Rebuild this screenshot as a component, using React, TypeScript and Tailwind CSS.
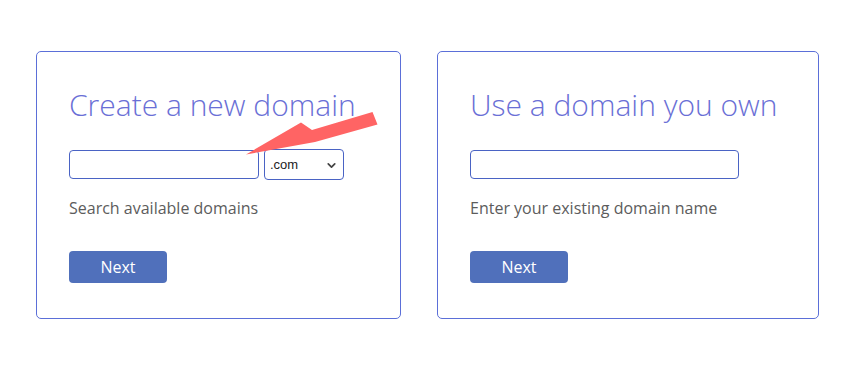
import { ChevronDown } from 'lucide-react';

function Card({
    title,
    hint,
    withTld,
    inputWidth,
    width,
}: {
    title: string;
    hint: string;
    withTld?: boolean;
    inputWidth: string;
    width: string;
}) {
    return (
        <div className={`${width} h-[268px] shrink-0 rounded-[5px] border border-[#5b6fd8] bg-white pl-[32px] pt-[35px]`}>
            <h2 className="text-[30px] leading-[36px] font-light text-[#6a6fd6]">{title}</h2>

            <div className="mt-[26px] flex items-start gap-[5px]">
                <input
                    type="text"
                    className={`${inputWidth} mt-px h-[29px] rounded-[4px] border border-[#4a63c4] bg-white outline-none`}
                />
                {withTld && (
                    <div className="relative flex h-[31px] w-[80px] items-center rounded-[4px] border border-[#4a63c4] bg-white pl-[5px]">
                        <span className="font-['Liberation_Sans',sans-serif] text-[13px] text-[#222]">.com</span>
                        <ChevronDown size={13} strokeWidth={3.2} className="absolute right-[5px] top-[9px] text-[#444]" />
                    </div>
                )}
            </div>

            <p className={`${withTld ? 'mt-[16px]' : 'mt-[17px]'} text-[16px] leading-[24px] text-[#5c5c5c]`}>{hint}</p>

            <button className="mt-[31px] h-[32px] w-[98px] rounded-[4px] bg-[#5070bb] text-[16px] text-white">
                Next
            </button>
        </div>
    );
}

export default function App() {
    return (
        <div className="relative h-[368px] w-[858px] bg-white font-['Open_Sans',sans-serif]">
            <div className="flex gap-[36px] pl-[36px] pt-[51px]">
                <Card
                    title="Create a new domain"
                    hint="Search available domains"
                    withTld
                    inputWidth="w-[190px]"
                    width="w-[365px]"
                />
                <Card
                    title="Use a domain you own"
                    hint="Enter your existing domain name"
                    inputWidth="w-[269px]"
                    width="w-[382px]"
                />
            </div>

            {/* annotation arrow */}
            <svg className="pointer-events-none absolute left-0 top-0" width="858" height="368">
                <polygon points="246,154.5 315,142 377.5,124.5 372.5,112 312,130 301,122.5" fill="#ff6464" />
            </svg>
        </div>
    );
}
